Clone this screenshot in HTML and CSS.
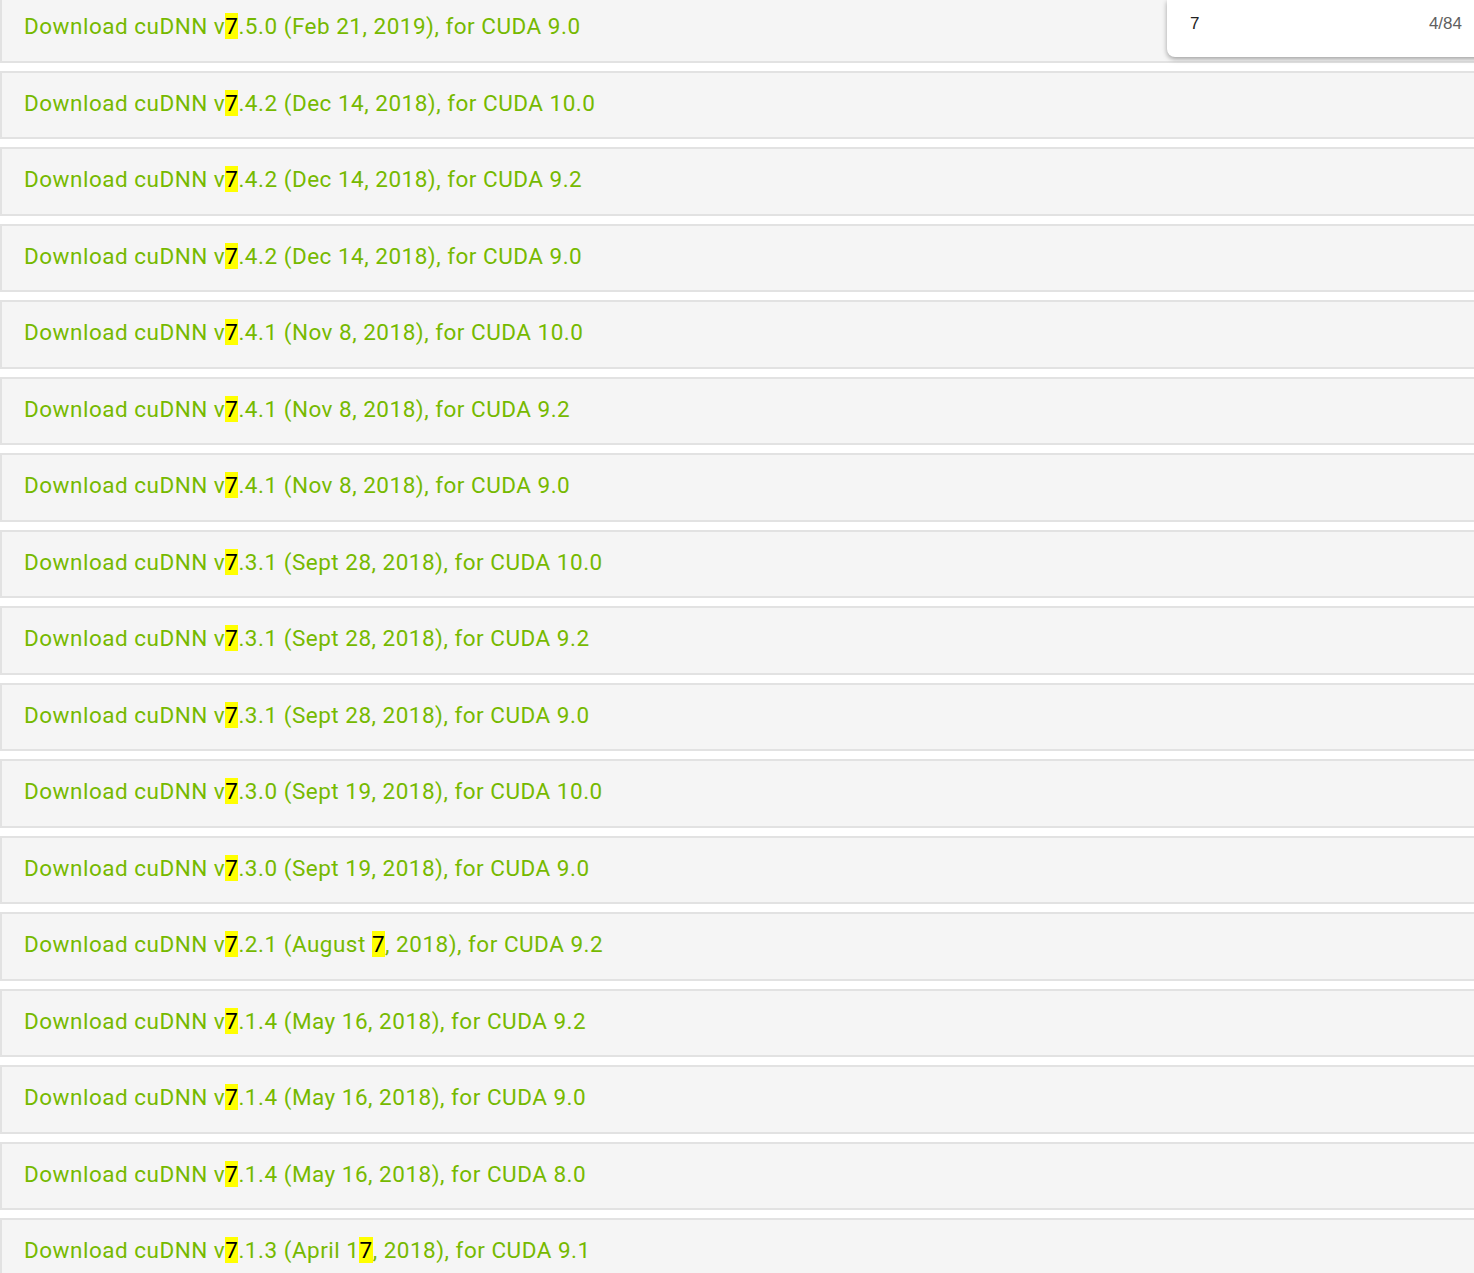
FILE: index.html
```html
<!DOCTYPE html>
<html>
<head>
<meta charset="utf-8">
<link rel="stylesheet" href="styles.css">
</head>
<body>
<div class="list">
  <div class="row"><a class="dl">Download cuDNN v<mark>7</mark>.5.0 (Feb 21, 2019), for CUDA 9.0</a></div>
  <div class="row"><a class="dl">Download cuDNN v<mark>7</mark>.4.2 (Dec 14, 2018), for CUDA 10.0</a></div>
  <div class="row"><a class="dl">Download cuDNN v<mark>7</mark>.4.2 (Dec 14, 2018), for CUDA 9.2</a></div>
  <div class="row"><a class="dl">Download cuDNN v<mark>7</mark>.4.2 (Dec 14, 2018), for CUDA 9.0</a></div>
  <div class="row"><a class="dl">Download cuDNN v<mark>7</mark>.4.1 (Nov 8, 2018), for CUDA 10.0</a></div>
  <div class="row"><a class="dl">Download cuDNN v<mark>7</mark>.4.1 (Nov 8, 2018), for CUDA 9.2</a></div>
  <div class="row"><a class="dl">Download cuDNN v<mark>7</mark>.4.1 (Nov 8, 2018), for CUDA 9.0</a></div>
  <div class="row"><a class="dl">Download cuDNN v<mark>7</mark>.3.1 (Sept 28, 2018), for CUDA 10.0</a></div>
  <div class="row"><a class="dl">Download cuDNN v<mark>7</mark>.3.1 (Sept 28, 2018), for CUDA 9.2</a></div>
  <div class="row"><a class="dl">Download cuDNN v<mark>7</mark>.3.1 (Sept 28, 2018), for CUDA 9.0</a></div>
  <div class="row"><a class="dl">Download cuDNN v<mark>7</mark>.3.0 (Sept 19, 2018), for CUDA 10.0</a></div>
  <div class="row"><a class="dl">Download cuDNN v<mark>7</mark>.3.0 (Sept 19, 2018), for CUDA 9.0</a></div>
  <div class="row"><a class="dl">Download cuDNN v<mark>7</mark>.2.1 (August <mark>7</mark>, 2018), for CUDA 9.2</a></div>
  <div class="row"><a class="dl">Download cuDNN v<mark>7</mark>.1.4 (May 16, 2018), for CUDA 9.2</a></div>
  <div class="row"><a class="dl">Download cuDNN v<mark>7</mark>.1.4 (May 16, 2018), for CUDA 9.0</a></div>
  <div class="row"><a class="dl">Download cuDNN v<mark>7</mark>.1.4 (May 16, 2018), for CUDA 8.0</a></div>
  <div class="row"><a class="dl">Download cuDNN v<mark>7</mark>.1.3 (April 1<mark>7</mark>, 2018), for CUDA 9.1</a></div>
</div>
<div class="findbar">
  <span class="query">7</span>
  <span class="count">4/84</span>
</div>
</body>
</html>
```
FILE: styles.css
```css
html, body {
  margin: 0;
  padding: 0;
  background: #ffffff;
  overflow: hidden;
}
.list {
  margin-top: -6px;
  display: flex;
  flex-direction: column;
  gap: 8px;
}
.row {
  box-sizing: border-box;
  height: 68.5px;
  background: #f5f5f5;
  border: 2px solid #e2e2e2;
  border-right: none;
  display: flex;
  align-items: center;
  padding-left: 22px;
  padding-bottom: 4px;
}
.dl {
  font-family: Roboto, "Liberation Sans", sans-serif;
  font-size: 22.5px;
  letter-spacing: 0.5px;
  color: #76b900;
  white-space: nowrap;
}
mark {
  background: #ffff00;
  color: #000000;
}
.findbar {
  position: absolute;
  top: 0;
  left: 1167px;
  width: 330px;
  height: 57px;
  background: #ffffff;
  border-bottom-left-radius: 8px;
  box-shadow: 0 2px 5px rgba(0,0,0,0.35);
  display: flex;
  align-items: center;
  padding: 0 12px 10px 23px;
  box-sizing: border-box;
  font-family: "Liberation Sans", Arial, sans-serif;
  font-size: 17px;
}
.query {
  color: #222222;
  flex: 1;
}
.count {
  color: #5f5f5f;
  margin-right: 23px;
}
```
